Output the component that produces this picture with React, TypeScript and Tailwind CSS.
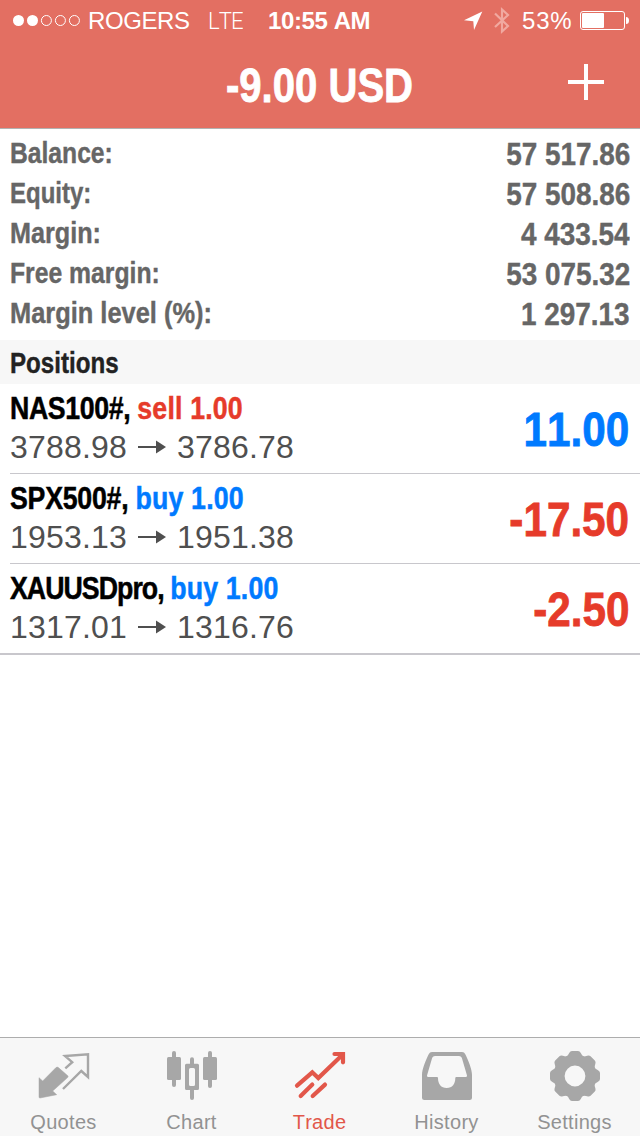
import type { ReactNode } from 'react'

const account = [
  { label: 'Balance:', value: '57 517.86', scale: 'scale-x-[0.822]' },
  { label: 'Equity:', value: '57 508.86', scale: 'scale-x-[0.8]' },
  { label: 'Margin:', value: '4 433.54', scale: 'scale-x-[0.84]' },
  { label: 'Free margin:', value: '53 075.32', scale: 'scale-x-[0.824]' },
  { label: 'Margin level (%):', value: '1 297.13', scale: 'scale-x-[0.847]' },
]

const positions = [
  { symbol: 'NAS100#,', side: 'sell', volume: '1.00', open: '3788.98', current: '3786.78', profit: '11.00', tracking: 'tracking-[-0.45px]' },
  { symbol: 'SPX500#,', side: 'buy', volume: '1.00', open: '1953.13', current: '1951.38', profit: '-17.50', tracking: 'tracking-[-0.3px]' },
  { symbol: 'XAUUSDpro,', side: 'buy', volume: '1.00', open: '1317.01', current: '1316.76', profit: '-2.50', tracking: 'tracking-[-1.15px]' },
]

function QuotesIcon() {
  return (
    <svg width="52" height="52" viewBox="0 0 52 52">
      <path d="M1 27.7 4.7 31 18 17.6Q19.2 16.6 20.4 17.6L29.8 25.8Q30.6 26.7 29.6 27.6L14.7 41 18.7 44.7 2 48Q1 48 1 47Z" fill="#a7a7a7" stroke="#a7a7a7" strokeWidth="0.5" />
      <path d="M27.3 18.3 34.2 12.2 27 6 50 4.2V27L43.3 21 25 39" fill="none" stroke="#a7a7a7" strokeWidth="2.4" />
    </svg>
  )
}

function ChartIcon() {
  return (
    <svg width="52" height="52" viewBox="0 0 52 52" fill="#a7a7a7">
      <rect x="1" y="7" width="14" height="23" rx="1.5" />
      <rect x="6" y="1" width="4" height="36" rx="2" />
      <path fillRule="evenodd" d="M20.5 13.7H31.5Q33 13.7 33 15.2V38.5Q33 40 31.5 40H20.5Q19 40 19 38.5V15.2Q19 13.7 20.5 13.7ZM24.5 18Q23 18 23 19.5V34.5Q23 36 24.5 36H27.5Q29 36 29 34.5V19.5Q29 18 27.5 18Z" />
      <rect x="24" y="7.3" width="4" height="8" rx="2" />
      <rect x="24" y="38" width="4" height="12" rx="2" />
      <rect x="37" y="7" width="14" height="23" rx="1.5" />
      <rect x="42" y="1" width="4" height="37" rx="2" />
    </svg>
  )
}

function TradeIcon() {
  return (
    <svg width="52" height="52" viewBox="0 0 52 52" fill="none" stroke="#e2574a" strokeWidth="4.2" strokeLinecap="round">
      <path d="M3 35.7 18.3 22.3 24.3 28 48.5 4.7M40.5 4H49V12.3M6.7 46 18.3 34.6M18.7 46 31 34.6" />
      <path d="M43 3H50.5V10Z" fill="#e2574a" stroke="none" />
    </svg>
  )
}

function HistoryIcon() {
  return (
    <svg width="52" height="52" viewBox="0 0 52 52" fill="#a7a7a7">
      <path
        fillRule="evenodd"
        d="M11 2H41Q43.3 2 44.3 4.2C47.5 11 51 19 51 25V47.5Q51 50 48.5 50H3.5Q1 50 1 47.5V25C1 19 4.5 11 7.7 4.2Q8.7 2 11 2ZM14 6Q12 6 11.2 7.8L6 25.5Q5.8 27 7.5 27H16Q17 27 17 28C17 34 20 38 25.7 38S34.3 34 34.3 28Q34.3 27 35.3 27H44.5Q46.2 27 46 25.5L40.8 7.8Q40 6 38 6Z"
      />
    </svg>
  )
}

function SettingsIcon() {
  return (
    <svg width="52" height="52" viewBox="-26 -26 52 52">
      <circle r="15.9" fill="none" stroke="#a7a7a7" strokeWidth="11" />
      {[0, 45, 90, 135, 180, 225, 270, 315].map((angle) => (
        <path
          key={angle}
          d="M-9 -18.5Q-7 -20.5 -5.8 -23Q-4.8 -25 -3 -25H3Q4.8 -25 5.8 -23Q7 -20.5 9 -18.5Z"
          transform={`rotate(${angle})`}
          fill="#a7a7a7"
        />
      ))}
    </svg>
  )
}

function Tab({ label, active, inset = 'pr-px', children }: { label: string; active?: boolean; inset?: string; children: ReactNode }) {
  return (
    <div className={`flex w-32 flex-col items-center pt-3 text-xl leading-6 tracking-[0.3px] ${inset} ${active ? 'text-[#e2574a]' : 'text-[#929292]'}`}>
      {children}
      <span className="mt-2">{label}</span>
    </div>
  )
}

function StatusBar() {
  return (
    <div className="flex h-[42px] items-center pl-3 text-2xl leading-[42px]">
      <svg width="70" height="14" viewBox="0 0 70 14" fill="none" stroke="#fff" className="shrink-0">
        <circle cx="6.5" cy="6.5" r="5.5" fill="#fff" stroke="none" />
        <circle cx="20.5" cy="6.5" r="5.5" fill="#fff" stroke="none" />
        <circle cx="34.4" cy="6.5" r="5" />
        <circle cx="48.4" cy="6.5" r="5" />
        <circle cx="62.4" cy="6.5" r="5" />
      </svg>
      <span className="ml-1.5 w-[120px] tracking-[-0.4px]">ROGERS</span>
      <span className="w-[60px] origin-left scale-x-[0.92] font-['Roboto'] font-light tracking-[-1px]">LTE</span>
      <span className="w-[195px] font-bold tracking-[-0.4px] whitespace-nowrap">10:55 AM</span>
      <svg width="20" height="20" viewBox="0 0 20 20" className="shrink-0">
        <path d="M19.3 0.5 11 19 10.3 10.2 1 9.3Z" fill="#fff" />
      </svg>
      <svg width="16" height="28" viewBox="0 0 16 28" fill="none" stroke="#f1a9a0" strokeWidth="2.2" className="ml-[11px] shrink-0">
        <path d="M1 6.5 14 19 8 24.5V2.5L14 8 1 20" />
      </svg>
      <span className="ml-3 w-[58px] tracking-[0.8px]">53%</span>
      <svg width="50" height="20" viewBox="0 0 50 20" className="shrink-0">
        <rect x="0.5" y="0.5" width="44" height="18" rx="2.5" fill="none" stroke="#fff" />
        <rect x="2" y="2" width="22" height="15" rx="1" fill="#fff" />
        <path d="M46 6Q49 6 49 9.5T46 13Z" fill="#fff" />
      </svg>
    </div>
  )
}

export default function App() {
  return (
    <div className="flex h-[1136px] w-[640px] flex-col overflow-hidden bg-white font-['Liberation_Sans',Arial,sans-serif] [font-kerning:none]">
      <header className="h-[129px] border-b border-[#b2b2b2] bg-[#e36f62] text-white">
        <StatusBar />
        <div className="flex h-[86px] items-start">
          <div className="w-[71px]" />
          <h1 className="flex-1 scale-x-[0.835] text-center text-5xl leading-[88px] font-bold [-webkit-text-stroke:0.8px]">-9.00 USD</h1>
          <div className="w-[72px] pt-[22px]">
            <svg width="36" height="36" viewBox="0 0 36 36">
              <path d="M18 0V36M0 18H36" stroke="#fff" strokeWidth="4" />
            </svg>
          </div>
        </div>
      </header>

      <div className="h-[211px] px-2.5 pt-1 font-bold text-[#666] [-webkit-text-stroke:0.4px]">
        {account.map((row) => (
          <div key={row.label} className="flex h-10 justify-between leading-10">
            <span className={`origin-left text-[30px] ${row.scale}`}>{row.label}</span>
            <span className="origin-right scale-x-[0.872] pt-px text-[32px]">{row.value}</span>
          </div>
        ))}
      </div>

      <h2 className="h-11 bg-[#f7f7f7] px-2.5 text-[30px] leading-[45px] font-bold text-[#222] [-webkit-text-stroke:0.4px]">
        <span className="inline-block origin-left scale-x-[0.805]">Positions</span>
      </h2>

      <div className="border-b border-[#c8c7cc]">
        {positions.map((p) => (
          <div key={p.symbol} className="ml-2.5 flex h-[90px] justify-between border-b border-[#c8c7cc] pr-2.5 last:ml-0 last:pl-2.5">
            <div className="pt-1">
              <div className="h-[39px] origin-left scale-x-[0.835] text-[32px] leading-10 font-bold whitespace-pre text-black [-webkit-text-stroke:0.5px]">
                <span className={p.tracking}>{p.symbol} </span>
                <span className={`tracking-[0.2px] ${p.side === 'buy' ? 'text-[#007aff]' : 'text-[#e63b2a]'}`}>{p.side} {p.volume}</span>
              </div>
              <div className="flex items-center text-[32px] leading-10 tracking-[0.2px] text-[#4f4f4f]">
                <span className="w-[127px]">{p.open}</span>
                <svg width="30" height="14" viewBox="0 0 30 14" className="mr-[10px]">
                  <path d="M1 7H20" stroke="#4f4f4f" strokeWidth="2" />
                  <path d="M19 0.5 29 7 19 13.5Z" fill="#4f4f4f" />
                </svg>
                <span>{p.current}</span>
              </div>
            </div>
            <div className={`mr-px origin-right scale-x-[0.88] text-5xl leading-[91px] font-bold [-webkit-text-stroke:0.8px] ${p.profit.startsWith('-') ? 'text-[#e63b2a]' : 'text-[#007aff]'}`}>
              {p.profit}
            </div>
          </div>
        ))}
      </div>

      <nav className="mt-auto flex h-[99px] border-t border-[#adadad] bg-[#f7f7f7]">
        <Tab label="Quotes"><QuotesIcon /></Tab>
        <Tab label="Chart"><ChartIcon /></Tab>
        <Tab label="Trade" active><TradeIcon /></Tab>
        <Tab label="History" inset="pr-[3px]"><HistoryIcon /></Tab>
        <Tab label="Settings" inset="pr-[3px]"><SettingsIcon /></Tab>
      </nav>
    </div>
  )
}
